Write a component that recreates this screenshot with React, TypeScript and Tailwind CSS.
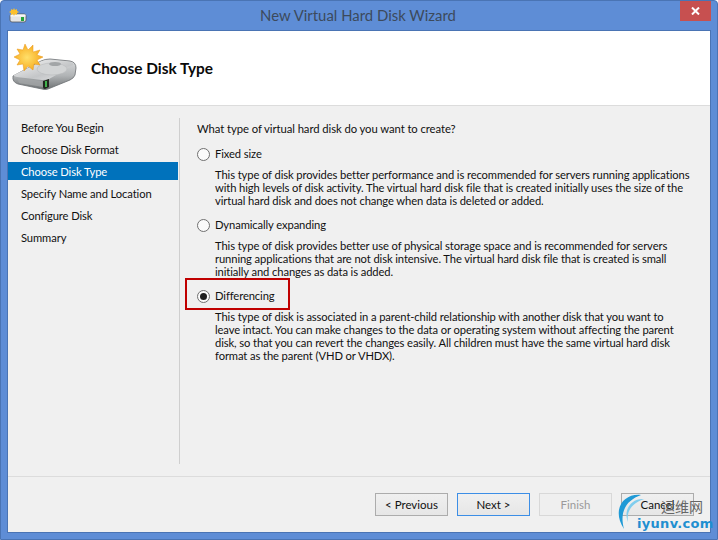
import React from "react";

const font = { fontFamily: '"Lato", "Noto Sans CJK SC", sans-serif' };

function BigDisk() {
  return (
    <svg width="66" height="47" viewBox="0 0 66 47">
      <defs>
        <linearGradient id="bside" x1="0" y1="0" x2="0" y2="1">
          <stop offset="0" stopColor="#dcdedf" />
          <stop offset="0.55" stopColor="#b0b3b5" />
          <stop offset="1" stopColor="#6d7173" />
        </linearGradient>
        <linearGradient id="btop" x1="0" y1="0" x2="1" y2="1">
          <stop offset="0" stopColor="#f6f6f6" />
          <stop offset="0.6" stopColor="#c4c6c8" />
          <stop offset="1" stopColor="#e4e5e6" />
        </linearGradient>
        <radialGradient id="bstar" cx="0.45" cy="0.5" r="0.55">
          <stop offset="0" stopColor="#ffe06a" />
          <stop offset="1" stopColor="#f7a81b" />
        </radialGradient>
      </defs>
      <path d="M1 32 L29 17 Q33 15 38 15 L58 17 Q64 18 64 24 L63 31 Q62 34 58 36 L36 45 Q33 46 30 45 L6 40 Q0 38 1 32Z" fill="url(#bside)" stroke="#6b6f72" strokeWidth="0.8" />
      <path d="M2 31 L30 17 Q33 16 38 16 L58 18 Q63 19 60 22 L37 35 Q34 36 30 36 L5 33 Q1 32 2 31Z" fill="url(#btop)" />
      <ellipse cx="40" cy="25" rx="15" ry="6" fill="#d2d4d5" stroke="#b4b7b9" strokeWidth="0.5" />
      <ellipse cx="43" cy="20" rx="6" ry="2" fill="#a2a5a7" />
      <path d="M5 34 L30 37 L31 43 L7 39Z" fill="#a5a8aa" opacity="0.7" />
      <path d="M31 37 L37 35 L37 43 L33 45 Q31 45 31 43Z" fill="#20261f" />
      <rect x="33" y="37" width="2" height="6" fill="#3fb24c" />
      <path d="M13 0 L16 6 L21 1 L21 8 L28 6 L25 11 L31 13 L25 16 L28 21 L22 20 L21 26 L16 22 L12 27 L11 20 L5 21 L8 16 L2 13 L8 10 L5 5 L11 6Z" fill="url(#bstar)" stroke="#e8971a" strokeWidth="0.5" />
    </svg>
  );
}

function SmallDisk() {
  return (
    <svg width="18" height="15" viewBox="0 0 18 15">
      <path d="M1 8 Q1 6 3 6 L15 6 Q17 6 17 8 L17 12 Q17 14 15 14 L3 14 Q1 14 1 12Z" fill="#e4e5e6" stroke="#55585b" strokeWidth="0.8" />
      <rect x="1.5" y="6.5" width="15" height="2" fill="#f7f7f7" />
      <rect x="12" y="9" width="3" height="4" fill="#24a53a" />
      <path d="M5 0 L6 2 L8 1 L8 3 L10 4 L8 5 L8 7 L6 6 L5 8 L4 6 L2 7 L2 5 L0 4 L2 3 L2 1 L4 2Z" fill="#fbc02d" />
    </svg>
  );
}

function Radio({ checked }: { checked?: boolean }) {
  return (
    <span className="flex h-[13px] w-[13px] shrink-0 items-center justify-center rounded-full border border-[#707070] bg-[#fbfbfb]">
      {checked && <span className="h-[7px] w-[7px] rounded-full bg-[#1f1f1f]" />}
    </span>
  );
}

function Option({ label, checked, lines, boxed }: { label: string; checked?: boolean; lines: string[]; boxed?: boolean }) {
  return (
    <div className="flex flex-col">
      <div className="relative flex h-[16px] items-center gap-[5px] pl-[1px]">
        <Radio checked={checked} />
        <span className="text-[11.2px] leading-[16px] tracking-[-0.1px] text-[#111]">{label}</span>
        {boxed && <span className="absolute left-[-11px] top-[-10px] h-[32px] w-[105px] border-2 border-[#c00000]" />}
      </div>
      <div className="mt-[6px] pl-[19px] text-[11.2px] leading-[13px] tracking-[-0.1px] text-[#111]">
        {lines.map((l) => (
          <div key={l} className="whitespace-nowrap">{l}</div>
        ))}
      </div>
    </div>
  );
}

function Btn({ children, tone }: { children: string; tone?: "focus" | "off" }) {
  const cls =
    tone === "focus"
      ? "border-[#3c8ee6] text-[#111] bg-gradient-to-b from-[#f0f0f0] to-[#e6e6e6]"
      : tone === "off"
        ? "border-[#d8d8d8] text-[#9a9a9a] bg-[#efefef]"
        : "border-[#acacac] text-[#111] bg-gradient-to-b from-[#f0f0f0] to-[#e6e6e6]";
  return (
    <div className={`flex h-[23px] w-[73px] items-center justify-center border text-[11.5px] ${cls}`}>{children}</div>
  );
}

const steps = ["Before You Begin", "Choose Disk Format", "Choose Disk Type", "Specify Name and Location", "Configure Disk", "Summary"];

export default function App() {
  return (
    <div style={font} className="relative flex h-[540px] w-[718px] flex-col overflow-hidden rounded-t-[4px] border border-[#4a74b4] bg-[#5e8dd6]">
      <div className="relative flex h-[29px] shrink-0 items-center justify-center">
        <span className="absolute left-[8px] top-[7px] flex"><SmallDisk /></span>
        <span className="pr-[2px] text-[14.9px] text-[#3c4a5c]">New Virtual Hard Disk Wizard</span>
        <span className="absolute right-[6px] top-0 flex h-[20px] w-[31px] items-center justify-center bg-[#c75050]">
          <svg width="9" height="8" viewBox="0 0 9 8"><path d="M1 0.5 L8 7.5 M8 0.5 L1 7.5" stroke="#fff" strokeWidth="2" /></svg>
        </span>
      </div>
      <div className="mx-[6px] mb-[6px] flex flex-1 flex-col border border-[#4a74b4] bg-[#f0f0f0]">
        <div className="flex h-[75px] shrink-0 items-center border-b border-[#dcdcdc] bg-white pb-[2px] pl-[4px]">
          <BigDisk />
          <span className="ml-[13px] mt-[3px] text-[15.4px] font-bold text-[#0a0a0a]">Choose Disk Type</span>
        </div>
        <div className="flex h-[358px] shrink-0 pt-[12px]">
          <div className="flex w-[170px] shrink-0 flex-col">
            {steps.map((s, i) => (
              <div key={s} className={`mb-[4px] flex h-[18px] shrink-0 items-center pl-[13px] pt-[2px] text-[11.2px] tracking-[-0.1px] ${i === 2 ? "bg-[#0072bc] text-white" : "text-[#111]"}`}>
                {s}
              </div>
            ))}
          </div>
          <div className="ml-[1px] w-px shrink-0 bg-[#cfcfcf]" />
          <div className="flex flex-col pl-[16px]">
            <div className="ml-[1px] mt-[3px] text-[11.3px] leading-[16px] tracking-[-0.08px] text-[#111]">What type of virtual hard disk do you want to create?</div>
            <div className="mt-[9px] flex flex-col gap-[10px]">
              <Option label="Fixed size" lines={[
                "This type of disk provides better performance and is recommended for servers running applications",
                "with high levels of disk activity. The virtual hard disk file that is created initially uses the size of the",
                "virtual hard disk and does not change when data is deleted or added.",
              ]} />
              <Option label="Dynamically expanding" lines={[
                "This type of disk provides better use of physical storage space and is recommended for servers",
                "running applications that are not disk intensive. The virtual hard disk file that is created is small",
                "initially and changes as data is added.",
              ]} />
              <Option label="Differencing" checked boxed lines={[
                "This type of disk is associated in a parent-child relationship with another disk that you want to",
                "leave intact. You can make changes to the data or operating system without affecting the parent",
                "disk, so that you can revert the changes easily. All children must have the same virtual hard disk",
                "format as the parent (VHD or VHDX).",
              ]} />
            </div>
          </div>
        </div>
        <div className="mt-[12px] border-t border-[#dcdcdc]" />
        <div className="mt-[16px] flex justify-end gap-[9px] pr-[16px]">
          <Btn>{"< Previous"}</Btn>
          <Btn tone="focus">{"Next >"}</Btn>
          <Btn tone="off">Finish</Btn>
          <Btn>Cancel</Btn>
        </div>
      </div>
      <div className="absolute left-[613px] top-[491px] h-[48px] w-[104px]">
        <svg className="absolute left-0 top-0" width="40" height="48" viewBox="0 0 40 48">
          <path d="M27 3 C10 1 -3 17 10 37 C5 19 13 8 27 3Z" fill="#1f9ad6" />
          <path d="M30 7 C17 6 9 18 14 30 C12 18 19 11 30 7Z" fill="#7fcdee" />
        </svg>
        <span className="absolute left-[47px] top-[6px] text-[14px] leading-[18px] text-[#666]">运维网</span>
        <span className="absolute left-[23px] top-[24px] text-[13px] font-bold leading-[16px] tracking-[0.3px] text-[#1f8fd0]" style={{ fontFamily: '"DejaVu Sans", sans-serif' }}>iyunv.com</span>
      </div>
    </div>
  );
}
